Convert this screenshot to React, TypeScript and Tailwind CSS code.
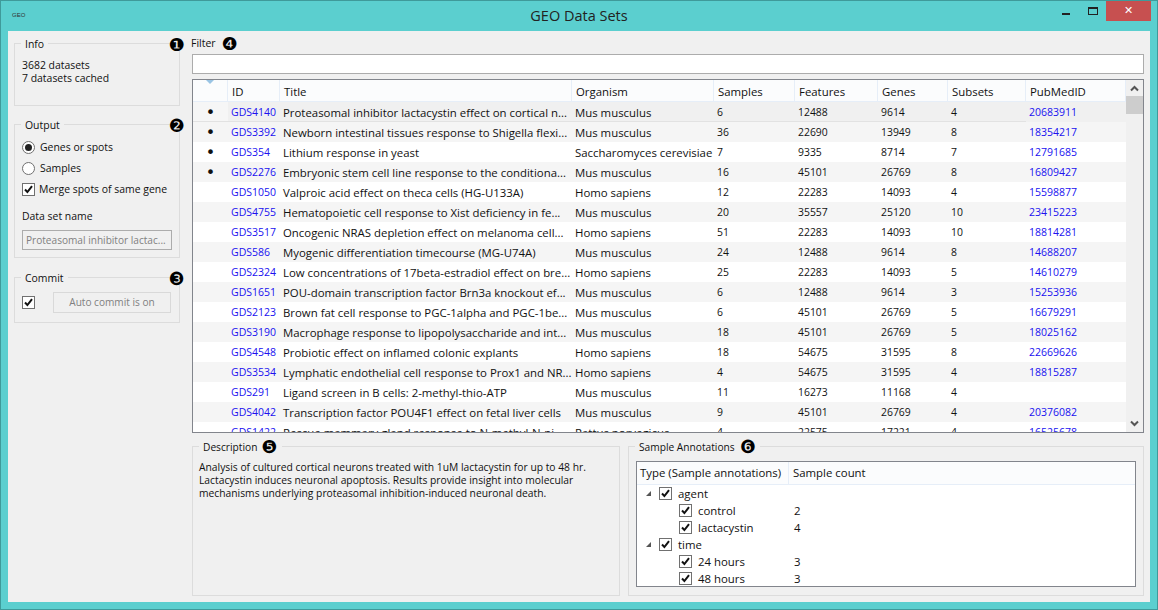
const rows = [
  ["•", "GDS4140", "Proteasomal inhibitor lactacystin effect on cortical n...", "Mus musculus", "6", "12488", "9614", "4", "20683911"],
  ["•", "GDS3392", "Newborn intestinal tissues response to Shigella flexi...", "Mus musculus", "36", "22690", "13949", "8", "18354217"],
  ["•", "GDS354", "Lithium response in yeast", "Saccharomyces cerevisiae", "7", "9335", "8714", "7", "12791685"],
  ["•", "GDS2276", "Embryonic stem cell line response to the conditiona...", "Mus musculus", "16", "45101", "26769", "8", "16809427"],
  ["", "GDS1050", "Valproic acid effect on theca cells (HG-U133A)", "Homo sapiens", "12", "22283", "14093", "4", "15598877"],
  ["", "GDS4755", "Hematopoietic cell response to Xist deficiency in fe...", "Mus musculus", "20", "35557", "25120", "10", "23415223"],
  ["", "GDS3517", "Oncogenic NRAS depletion effect on melanoma cell...", "Homo sapiens", "51", "22283", "14093", "10", "18814281"],
  ["", "GDS586", "Myogenic differentiation timecourse (MG-U74A)", "Mus musculus", "24", "12488", "9614", "8", "14688207"],
  ["", "GDS2324", "Low concentrations of 17beta-estradiol effect on bre...", "Homo sapiens", "25", "22283", "14093", "5", "14610279"],
  ["", "GDS1651", "POU-domain transcription factor Brn3a knockout ef...", "Mus musculus", "6", "12488", "9614", "3", "15253936"],
  ["", "GDS2123", "Brown fat cell response to PGC-1alpha and PGC-1be...", "Mus musculus", "6", "45101", "26769", "5", "16679291"],
  ["", "GDS3190", "Macrophage response to lipopolysaccharide and int...", "Mus musculus", "18", "45101", "26769", "5", "18025162"],
  ["", "GDS4548", "Probiotic effect on inflamed colonic explants", "Homo sapiens", "18", "54675", "31595", "8", "22669626"],
  ["", "GDS3534", "Lymphatic endothelial cell response to Prox1 and NR...", "Homo sapiens", "4", "54675", "31595", "4", "18815287"],
  ["", "GDS291", "Ligand screen in B cells: 2-methyl-thio-ATP", "Mus musculus", "11", "16273", "11168", "4", ""],
  ["", "GDS4042", "Transcription factor POU4F1 effect on fetal liver cells", "Mus musculus", "9", "45101", "26769", "4", "20376082"],
  ["", "GDS1422", "Rescue mammary gland response to N-methyl-N-ni...", "Rattus norvegicus", "4", "22575", "17221", "4", "16525678"],
];

const headers = ["", "ID", "Title", "Organism", "Samples", "Features", "Genes", "Subsets", "PubMedID"];
const gridCols = "grid grid-cols-[35px_52px_292px_142px_81px_83px_70px_78px_100px]";

function cellClass(row: number, col: number) {
  let cls = "flex items-center overflow-hidden whitespace-nowrap ";
  if (col === 0) cls += "justify-center pt-[1px] font-['DejaVu_Sans'] text-[16px] ";
  else if (col === 1 || col === 8) cls += "pl-[3px] pt-[2px] text-[10.5px] text-[#2010f0] ";
  else if (col >= 4) cls += "pl-[3px] pt-[2px] text-[10.4px] ";
  else cls += "pl-[3px] pt-[2px] ";
  if (row === 0 && col < 8) cls += "shadow-[inset_0_-1px_0_#e2e2e2] ";
  if (row === 0 && col === 0) cls += "bg-[#f6f6f6] ";
  return cls;
}

function Badge({ n, className }: { n: string; className?: string }) {
  return <span className={"font-['DejaVu_Sans'] text-[18px] leading-[16px] text-black " + (className ?? "")}>{n}</span>;
}

function Check() {
  return (
    <span className="flex h-[13px] w-[13px] shrink-0 items-center justify-center border border-[#707070] bg-white">
      <svg width="9" height="9" viewBox="0 0 9 9">
        <path d="M1 4.5 L3.4 7 L8 1.2" fill="none" stroke="#111" strokeWidth="2" />
      </svg>
    </span>
  );
}

function Group({ title, badge, className, children }: { title: React.ReactNode; badge?: string; className?: string; children: React.ReactNode }) {
  return (
    <div className={"relative border border-[#dcdcdc] " + (className ?? "")}>
      <span className="absolute left-[6px] top-[-8px] bg-[#f0f0f0] px-[4px] leading-[16px]">{title}</span>
      {badge && <Badge n={badge} className="absolute right-[-6px] top-[-7px]" />}
      {children}
    </div>
  );
}

function Radio({ on, label }: { on?: boolean; label: string }) {
  return (
    <div className="flex h-[21px] items-center gap-[5px] pl-[7px]">
      <span className="flex h-[13px] w-[13px] items-center justify-center rounded-full border border-[#707070] bg-white">
        {on && <span className="h-[7px] w-[7px] rounded-full bg-[#222]" />}
      </span>
      <span>{label}</span>
    </div>
  );
}

function TreeRow({ label, count, parent }: { label: string; count?: string; parent?: boolean }) {
  return (
    <div className="flex h-[17px] items-center">
      <div className={"flex w-[152px] items-center gap-[6px] " + (parent ? "pl-[9px]" : "pl-[42px]")}>
        {parent && <span className="mr-[2px] h-0 w-0 border-b-[5px] border-l-[5px] border-b-[#555] border-l-transparent" />}
        <Check />
        <span>{label}</span>
      </div>
      {count && <span className="pl-[5px]">{count}</span>}
    </div>
  );
}

export default function App() {
  return (
    <div className="flex h-[610px] w-[1158px] flex-col overflow-hidden border border-[#3f9a9a] bg-[#5bcfcf] font-['Open_Sans',sans-serif] text-[11.4px] text-[#111]">
      {/* title bar */}
      <div className="relative flex h-[30px] shrink-0 items-center justify-center">
        <span className="absolute left-[11px] top-[10px] font-['Liberation_Sans'] text-[6px] leading-[8px] text-[#333]">GEO</span>
        <span className="text-[14.5px] text-[#222]">GEO Data Sets</span>
        <div className="absolute right-[6px] top-0 flex h-[20px] items-center">
          <span className="mr-[18px] mt-[6px] h-[2px] w-[8px] bg-[#222]" />
          <span className="mr-[8px] h-[8px] w-[10px] border border-t-2 border-[#222]" />
          <span className="flex h-[20px] w-[45px] items-center justify-center bg-[#c75050] font-['DejaVu_Sans'] text-[11px] font-bold text-white">✕</span>
        </div>
      </div>

      {/* window body */}
      <div className="mx-[7px] mb-[7px] flex min-h-0 flex-1 gap-[12px] bg-[#f0f0f0] pl-[6px] pr-[6px] pt-[5px]">
        <div className="mt-[7px] flex w-[166px] shrink-0 flex-col text-[10.45px]">
          <Group title="Info" badge="❶" className="h-[63px] pl-[7px] pt-[15px]">
            <div className="leading-[13px]">3682 datasets</div>
            <div className="leading-[13px]">7 datasets cached</div>
          </Group>
          <Group title="Output" badge="❷" className="mt-[18px] h-[134px] pt-[12px]">
            <Radio on label="Genes or spots" />
            <Radio label="Samples" />
            <div className="flex h-[21px] items-center gap-[4px] whitespace-nowrap pl-[7px]">
              <Check />
              <span>Merge spots of same gene</span>
            </div>
            <div className="mt-[8px] pl-[7px] leading-[16px]">Data set name</div>
            <div className="mx-[7px] mt-[6px] h-[20px] whitespace-nowrap border border-[#acacac] bg-[#f0f0f0] px-[3px] text-[10.1px] leading-[18px] text-[#808080]">Proteasomal inhibitor lactac...</div>
          </Group>
          <Group title="Commit" badge="❸" className="mt-[19px] h-[46px] pl-[7px] pt-[14px]">
            <div className="flex items-center gap-[18px]">
              <Check />
              <div className="flex h-[21px] w-[118px] items-center justify-center border border-[#d9d9d9] text-[10.1px] text-[#808080]">Auto commit is on</div>
            </div>
          </Group>
        </div>

        <div className="flex min-w-0 flex-1 flex-col">
          <div className="-ml-[1px] flex h-[16px] items-center gap-[6px] text-[10.5px]">
            <span>Filter</span>
            <Badge n="❹" />
          </div>
          <div className="mt-[2px] h-[20px] shrink-0 border border-[#acacac] bg-white" />

          <div className="mt-[5px] flex h-[354px] shrink-0 overflow-hidden border border-[#82858c] bg-white">
            <div className="min-w-0 flex-1">
              <div className={gridCols + " h-[22px] border-b border-[#e6eef8] bg-[#fbfcfd]"}>
                {headers.map((h, i) => (
                  <div key={i} className="relative flex items-center border-r border-[#e6eef8] pl-[4px] pt-[2px]">
                    {i === 0 && <span className="absolute left-[13px] top-0 h-0 w-0 border-x-[4px] border-t-[4px] border-x-transparent border-t-[#9ac4e4]" />}
                    {h}
                  </div>
                ))}
              </div>
              {rows.map((r, i) => (
                <div key={r[1]} className={gridCols + " h-[20px] " + (i === 0 ? "bg-[#f0f0f0]" : i % 2 === 1 ? "bg-[#f5f5f5]" : "bg-white")}>
                  {r.map((c, j) => (
                    <div key={j} className={cellClass(i, j)}>
                      {c}
                    </div>
                  ))}
                </div>
              ))}
            </div>
            {/* scrollbar */}
            <div className="flex w-[17px] shrink-0 flex-col bg-[#f0f0f0]">
              <div className="flex h-[16px] items-center justify-center">
                <svg width="9" height="7" viewBox="0 0 9 7"><path d="M1 5.5 L4.5 2 L8 5.5" fill="none" stroke="#555" strokeWidth="2" /></svg>
              </div>
              <div className="h-[18px] bg-[#cdcdcd]" />
              <div className="flex-1" />
              <div className="flex h-[17px] items-center justify-center">
                <svg width="9" height="7" viewBox="0 0 9 7"><path d="M1 1.5 L4.5 5 L8 1.5" fill="none" stroke="#555" strokeWidth="2" /></svg>
              </div>
            </div>
          </div>

          <div className="mt-[13px] flex min-h-0 flex-1 gap-[8px] pb-[6px]">
            <Group
              title={<span className="flex items-center gap-[4px] text-[10.2px]">Description <Badge n="❺" /></span>}
              className="h-[150px] w-[428px] px-[6px] pt-[14px] text-[10.3px] leading-[13px]"
            >
              <div className="whitespace-nowrap">Analysis of cultured cortical neurons treated with 1uM lactacystin for up to 48 hr.</div>
              <div className="whitespace-nowrap">Lactacystin induces neuronal apoptosis. Results provide insight into molecular</div>
              <div className="whitespace-nowrap">mechanisms underlying proteasomal inhibition-induced neuronal death.</div>
            </Group>
            <Group
              title={<span className="flex items-center gap-[5px] text-[10.2px]">Sample Annotations <Badge n="❻" /></span>}
              className="h-[150px] flex-1 px-[7px] pt-[14px]"
            >
              <div className="h-[126px] border border-[#82858c] bg-white">
                <div className="flex h-[23px] border-b border-[#e6eef8] bg-[#fbfcfd]">
                  <div className="flex w-[152px] items-center border-r border-[#e6eef8] pl-[3px]">Type (Sample annotations)</div>
                  <div className="flex items-center pl-[4px]">Sample count</div>
                </div>
                <div>
                  <TreeRow parent label="agent" />
                  <TreeRow label="control" count="2" />
                  <TreeRow label="lactacystin" count="4" />
                  <TreeRow parent label="time" />
                  <TreeRow label="24 hours" count="3" />
                  <TreeRow label="48 hours" count="3" />
                </div>
              </div>
            </Group>
          </div>
        </div>
      </div>
    </div>
  );
}
